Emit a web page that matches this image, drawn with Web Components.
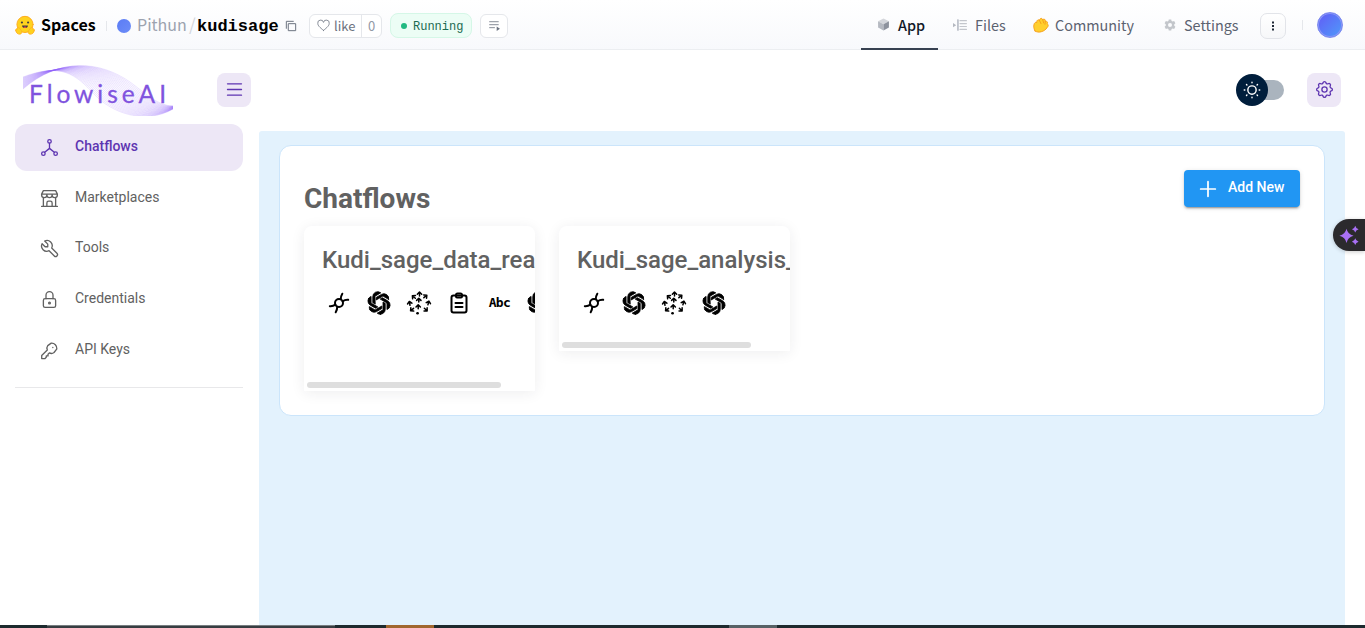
<!DOCTYPE html>
<html lang="en">
<head>
<meta charset="utf-8">
<title>Flowise</title>
<style>
html,body{margin:0;height:100%;overflow:hidden;background:#fff}
</style>
</head>
<body>
<space-app></space-app>
<script>
const define = (name, css, html) => customElements.define(name, class extends HTMLElement {
  constructor() {
    super();
    const t = document.createElement('template');
    t.innerHTML = `<style>*{box-sizing:border-box}svg{display:block;flex:none}${css}</style>` + (typeof html === 'function' ? html(this) : html);
    this.attachShadow({mode: 'open'}).append(t.content.cloneNode(true));
  }
});

const arrows = [[12.5,2.6,0],[6.6,5.8,-50],[18.6,5.2,50],[2.6,12,-10],[11.800,8.800,0],[21.500,11.600,15],[4.800,18.800,-130],[11.200,15.400,0],[19,18.800,135]];
const icons = {
  hierarchy: '<circle cx="12" cy="5" r="2"/><circle cx="5" cy="19" r="2"/><circle cx="19" cy="19" r="2"/><path d="M6.5 17.5l5.5-4.5l5.5 4.5M12 7v6"/>',
  store: '<path d="M3 21h18M3 7v1a3 3 0 0 0 6 0v-1m0 1a3 3 0 0 0 6 0v-1m0 1a3 3 0 0 0 6 0v-1h-18l2-4h14l2 4M5 21v-10.15M19 21v-10.15M9 21v-4a2 2 0 0 1 2-2h2a2 2 0 0 1 2 2v4"/>',
  tool: '<path d="M7 10h3v-3l-3.5-3.5a6 6 0 0 1 8 8l6 6a2 2 0 0 1-3 3l-6-6a6 6 0 0 1-8-8l3.5 3.5"/>',
  lock: '<rect x="5" y="11" width="14" height="10" rx="2"/><circle cx="12" cy="16" r="1"/><path d="M8 11v-4a4 4 0 1 1 8 0v4"/>',
  key: '<path d="M14 3.6a6 6 0 0 1 6.4 6.5l-3.2 4.2a5 5 0 0 1-5.4.5l-1.5 1.4v2h-2v1.6l-1.4 1.4h-3.8v-3.4l6.4-6.4a5 5 0 0 1 .5-5zM15.8 8.6h.01"/>',
  gear: '<path d="M10.325 4.317c.426-1.756 2.924-1.756 3.35 0a1.724 1.724 0 0 0 2.573 1.066c1.543-.94 3.31.826 2.37 2.37a1.724 1.724 0 0 0 1.065 2.572c1.756.426 1.756 2.924 0 3.35a1.724 1.724 0 0 0-1.066 2.573c.94 1.543-.826 3.31-2.37 2.37a1.724 1.724 0 0 0-2.572 1.065c-.426 1.756-2.924 1.756-3.35 0a1.724 1.724 0 0 0-2.573-1.066c-1.543.94-3.31-.826-2.37-2.37a1.724 1.724 0 0 0-1.065-2.572c-1.756-.426-1.756-2.924 0-3.35a1.724 1.724 0 0 0 1.066-2.573c-.94-1.543.826-3.31 2.37-2.37c1 .608 2.296.07 2.572-1.065z"/><circle cx="12" cy="12" r="3"/>',
  menu: '<path d="M4 5.500h16M4 12h16M4 18.500h16"/>',
  plus: '<path d="M12 4v16M4 12h16"/>',
  sun: '<circle cx="12" cy="12" r="5"/><path d="M12 2.700v.7M12 20.600v.7M2.700 12h.7M20.600 12h.7M5.400 5.400l.5.5M18.100 18.100l.5.5M18.600 5.400l-.5.5M5.900 18.100l-.5.5"/>',
  chain: '<circle cx="12" cy="12" r="4"/><path d="M2.800 15.200q3 .3 5.700-1.500M8.700 21.300q1.600-2.600 1.500-5.500M21.200 8.800q-3-.3-5.700 1.500M15.300 2.700q-1.600 2.600-1.500 5.500"/>',
  openai: '<path fill="currentColor" stroke-width=".75" d="M13.260 22.429a4.4755 4.4755 0 0 1-2.8764-1.0408l.1419-.0804 4.7783-2.7582a.7948.7948 0 0 0 .3927-.6813v-6.7369l2.02 1.1686a.071.071 0 0 1 .038.052v5.5826a4.504 4.504 0 0 1-4.4945 4.4944zm-9.6607-4.1254a4.4708 4.4708 0 0 1-.5346-3.0137l.142.0852 4.783 2.7582a.7712.7712 0 0 0 .7806 0l5.8428-3.3685v2.3324a.0804.0804 0 0 1-.0332.0615L9.74 19.9502a4.4992 4.4992 0 0 1-6.1408-1.6464zM2.3408 7.8956a4.485 4.485 0 0 1 2.3655-1.9728V11.6a.7664.7664 0 0 0 .3879.6765l5.8144 3.3543-2.0201 1.1685a.0757.0757 0 0 1-.071 0l-4.8303-2.7865A4.504 4.504 0 0 1 2.3408 7.872zm16.5963 3.8558L13.1038 8.364 15.1192 7.2a.0757.0757 0 0 1 .071 0l4.8303 2.7913a4.4944 4.4944 0 0 1-.6765 8.1042v-5.6772a.79.79 0 0 0-.407-.667zm2.0107-3.0231l-.142-.0852-4.7735-2.7818a.7759.7759 0 0 0-.7854 0L9.409 9.2297V6.8974a.0662.0662 0 0 1 .0284-.0615l4.8303-2.7866a4.4992 4.4992 0 0 1 6.6802 4.66zM8.3065 12.863l-2.02-1.1638a.0804.0804 0 0 1-.038-.0567V6.0742a4.4992 4.4992 0 0 1 7.3757-3.4537l-.142.0805L8.704 5.459a.7948.7948 0 0 0-.3927.6813z"/>',
  tree: arrows.map(([x, y, r]) => `<path transform="translate(${x} ${y}) rotate(${r})" d="M0 2.300V-1.300M-2.200 .6L0-1.600L2.200 .6"/>`).join('') + '<path d="M10.400 22.300h.3" stroke-width="2.400"/>',
  clipboard: '<rect x="4.500" y="4.500" width="15" height="17" rx="2"/><path d="M9 4.500V4a1.500 1.500 0 0 1 1.500-1.500h3A1.500 1.500 0 0 1 15 4v1.500a1 1 0 0 1-1 1h-4a1 1 0 0 1-1-1zM8.500 12h7M8.500 16h7"/>',
  copy: '<path d="M8 8h12v12H8zM4 16V4h12"/>',
  heart: '<path d="M12 21C5 15.500 1.500 12 1.500 8.300a5.300 5.300 0 0 1 10.500-2 5.300 5.300 0 0 1 10.500 2c0 3.700-3.500 7.200-10.500 12.700z"/>',
  logs: '<path d="M3 5h16M3 10.500h16M3 16h9"/><path d="M16 14v8l6-4z" fill="currentColor" stroke="none"/>',
  dots: '<g fill="currentColor" stroke="none"><rect x="10" y="3" width="4" height="4"/><rect x="10" y="10" width="4" height="4"/><rect x="10" y="17" width="4" height="4"/></g>',
  cube: '<g stroke="none"><path fill="#d4d6db" d="M12 1L22 6 12 11.500 2 6z"/><path fill="#b5b9c1" d="M2 6l10 5.500V23L2 17.500z"/><path fill="#8d929d" d="M22 6l-10 5.500V23l10-5.500z"/></g>',
  files: '<path d="M8.500 3v18" stroke="#9ca3af"/><path d="M12 4.500h11M12 9.500h11M12 14.500h11M12 19.500h11" stroke="#c3c6cc"/><path d="M0 8.500l5.500 3.800L0 16z" fill="#b5b9c1" stroke="none"/>',
  cog: '<g fill="currentColor" stroke="none"><path fill-rule="evenodd" d="M9.500 1h5l.6 3 2.200 1.200 3-1 2.500 4.300-2.300 2v3l2.300 2-2.500 4.300-3-1-2.200 1.200-.6 3h-5l-.6-3-2.200-1.200-3 1-2.500-4.300 2.300-2v-3l-2.300-2 2.500-4.300 3 1L8.900 4zM12 8a4 4 0 1 0 0 8 4 4 0 0 0 0-8z"/></g>',
  hand: '<g stroke="#f59a1b" stroke-width="1.300"><path fill="#ffcf2e" d="M3 21C0 16 1 10 3 8.500c1-1 2.500-.5 2.500.5C5 5 8 3 9.500 5c1-3.500 4-4 5-1 2.500-2 4.500 0 4 2.500 3-.5 4 1.500 2.800 3.500 2.200 1 2 4-.2 6C18 21.500 8 25 3 21z"/><path d="M9.500 5l2.500 5M14.500 4l1.500 5M18.500 6.500L18 11"/></g>',
  hug: '<circle cx="12" cy="11.300" r="9.700" fill="#ffd21e" stroke="#ffad1f" stroke-width="1.200"/><circle cx="8.300" cy="9" r="1.300" fill="#3a3b45" stroke="none"/><circle cx="15.700" cy="9" r="1.300" fill="#3a3b45" stroke="none"/><path d="M8.500 12.500h7c0 4.300-7 4.300-7 0z" fill="#3a3b45" stroke="none"/><path d="M10 14.800c1-1.500 3-1.500 4 0-1 1-3 1-4 0z" fill="#f14f45" stroke="none"/><path d="M1 19c-1-2 1-3 2-2-1-2 1.500-3 2.500-1l2 2.500c1.500 2 .5 4.500-2 4.500C3 23 1.500 21.500 1 19zM23 19c1-2-1-3-2-2 1-2-1.500-3-2.500-1l-2 2.500c-1.500 2-.5 4.500 2 4.500 2.500 0 4-1.500 4.500-4z" fill="#ffd21e" stroke="#ffad1f" stroke-width="1"/>',
  sparkle: '<g fill="currentColor" stroke="none"><path d="M9 4.500Q10.500 11.200 17.500 13 10.500 14.800 9 21.500 7.500 14.800.500 13 7.500 11.200 9 4.500z"/><path d="M19.500 1Q20.200 4.300 23.500 5 20.200 5.700 19.500 9 18.800 5.700 15.500 5 18.800 4.300 19.500 1zM19.500 16Q20.200 19.300 23.500 20 20.200 20.700 19.500 24 18.800 20.700 15.500 20 18.800 19.300 19.500 16z"/></g>'
};

define('ui-icon', ':host{display:block;flex:none;line-height:0}', el => {
  const s = el.getAttribute('size') || 20, w = el.getAttribute('stroke') || 1.5;
  return `<svg width="${s}" height="${s}" viewBox="0 0 24 24" fill="none" stroke="currentColor" stroke-width="${w}" stroke-linecap="round" stroke-linejoin="round" overflow="visible">${icons[el.getAttribute('name')]}</svg>`;
});

define('header-tab', `
:host{display:flex;align-items:center;height:50px;gap:8px;color:#5b6270;font-size:14.400px;white-space:nowrap}
:host([active]){color:#111827;border-bottom:2px solid #374151;font-weight:500;padding-top:2px}
`, '<slot name="icon"></slot><span><slot></slot></span>');

define('space-header', `
:host{display:flex;height:50px;border-bottom:1px solid #eceef1;background:linear-gradient(#fff,#f8f9fc);font-family:"Noto Sans CJK SC","Noto Sans",sans-serif;padding:0 22px 0 15px;align-items:center;line-height:24px}
.left{display:flex;align-items:center;flex:1;height:50px;padding-top:2px}
.left>*{flex:none}
.left>.sp,.left>.own,.left>.slash{padding-bottom:3px}
.left>.hug{margin-top:-2px}
.sp{font-weight:700;font-size:16px;margin-left:6px;width:55px}
.sep{width:1px;height:10px;background:#e5e7eb;margin:0 10px}
.dot{width:14px;height:14px;border-radius:50%;background:linear-gradient(135deg,#5b7cf5,#6d8df8)}
.own{color:#9ca3af;font-size:16px;margin-left:6px;width:52px}
.slash{color:#d1d5db;width:8px;font-size:17px}
.repo{font:bold 17px "Liberation Mono",monospace;width:81px;color:#000;padding-top:2px}
.copy{color:#6b7280;margin-left:6px}
.like{display:flex;margin-left:11px;width:73px;height:24px;border:1px solid #e5e7eb;border-radius:6px;background:#fff;color:#6b7280;font-size:13px;align-items:center}
.like b{font-weight:400;width:52px;display:flex;align-items:center;gap:4px;padding-left:7px;height:100%;border-right:1px solid #e5e7eb}
.like i{font-style:normal;flex:1;text-align:center;color:#9299a6}
.run{display:flex;margin-left:8px;width:82px;height:25px;border:1px solid #d5f7e7;border-radius:8px;background:#ecfdf5;align-items:center;color:#1b6b52;font:12px "Liberation Mono",monospace;padding-left:10px;gap:6px}
.run s{text-decoration:none;padding-top:2px}
.run u{width:6px;height:6px;border-radius:50%;background:#21b981}
.log{margin-left:8px;width:28px;height:24px;border:1px solid #e5e7eb;border-radius:6px;background:#fff;color:#6b7280;display:grid;place-items:center}
.right{display:flex;align-items:center;height:50px;padding-top:1px}
.more{width:26px;height:26px;border:1px solid #e2e4e9;border-radius:7px;display:grid;place-items:center;color:#1f2937;background:linear-gradient(#fff,#f6f7f9);margin-top:1px}
.av{width:26px;height:26px;border-radius:50%;border:1px solid #7d8af0;background:linear-gradient(135deg,#625bf6,#4f9bfa);box-shadow:inset 0 0 0 1px #8a97f6}
`, `
<div class="left"><ui-icon class="hug" name="hug" size="20"></ui-icon><span class="sp">Spaces</span><span class="sep"></span><span class="dot"></span><span class="own">Pithun</span><span class="slash">/</span><span class="repo">kudisage</span><ui-icon class="copy" name="copy" size="14" stroke="1.700"></ui-icon>
<span class="like"><b><ui-icon name="heart" size="13"></ui-icon>like</b><i>0</i></span><span class="run"><u></u><s>Running</s></span><span class="log"><ui-icon name="logs" size="13"></ui-icon></span></div>
<div class="right">
<header-tab active style="width:77px;padding-left:16px;height:49px;padding-top:1px"><ui-icon slot="icon" name="cube" size="13"></ui-icon>App</header-tab>
<header-tab style="width:80px;padding-left:15px"><ui-icon slot="icon" name="files" size="14" stroke="2"></ui-icon>Files</header-tab>
<header-tab style="width:130px;padding-left:15px;gap:6px"><ui-icon slot="icon" name="hand" size="16"></ui-icon>Community</header-tab>
<header-tab style="width:112px;padding-left:16px"><ui-icon slot="icon" name="cog" size="12" style="color:#c3c6cb"></ui-icon>Settings</header-tab>
<span class="more"><ui-icon name="dots" size="12"></ui-icon></span><span class="sep" style="margin:0 14px 0 16px"></span><span class="av"></span></div>`);

define('flowise-logo', `
:host{display:grid;width:150px;height:52px}
:host>*{grid-area:1/1}
.t{font:24.500px/52px Lato,sans-serif;letter-spacing:4px;color:#8053de;padding:4px 0 0 6px;white-space:nowrap;-webkit-text-stroke:.3px #8053de}
`, () => {
  const a = [23,88,60,56,100,60,130,81,145,92,158,105,173,105], b = [23,76,60,62,75,72,95,94,112,112,145,124,173,108];
  let p = '';
  for (let i = 0; i <= 24; i++) {
    const v = a.map((n, k) => (n + (b[k] - n) * i / 24).toFixed(1));
    p += `<path d="M${v[0]} ${v[1]}C${v.slice(2, 8).join(' ')} ${v.slice(8).join(' ')}"/>`;
  }
  return `<svg width="150" height="52" viewBox="23 63 150 52" fill="none" stroke="#9061f9" stroke-width=".5" stroke-opacity=".34">${p}</svg><span class="t">FlowiseAI</span>`;
});

define('icon-button', ':host{display:grid;place-items:center;width:34px;height:34px;border-radius:8px;background:#ede7f6;color:#5e35b1;flex:none}', '<slot></slot>');

define('theme-switch', `
:host{display:flex;align-items:center;width:48px;height:32px;flex:none}
.k{width:32px;height:32px;border-radius:50%;background:#001e3c;color:#fff;display:grid;place-items:center;order:1;z-index:1}
.r{width:25px;height:20px;border-radius:0 10px 10px 0;background:#aab4be;margin-left:-9px;order:2}
`, '<span class="k"><ui-icon name="sun" size="20" stroke="1.700"></ui-icon></span><span class="r"></span>');

define('app-bar', `
:host{display:flex;box-sizing:border-box;align-items:center;height:81px;padding:0 24px 2px 23px}
icon-button.m{margin-left:44px}
theme-switch{margin:0 23px 0 auto}
`, '<flowise-logo></flowise-logo><icon-button class="m"><ui-icon name="menu" size="21"></ui-icon></icon-button><theme-switch></theme-switch><icon-button><ui-icon name="gear" size="21"></ui-icon></icon-button>');

define('nav-item', `
:host{display:flex;align-items:center;height:46.750px;margin-bottom:4px;border-radius:12px;padding-left:24px;gap:15px;color:#616161;font:14px/20px Roboto,sans-serif}
:host([selected]){background:#ede7f6;color:#5e35b1;font-weight:500}
span{padding-bottom:3px}
`, el => `<ui-icon name="${el.getAttribute('icon')}" size="21"></ui-icon><span><slot></slot></span>`);

define('side-nav', `
:host{display:block;width:259px;box-sizing:border-box;flex:none;padding:0 16px 0 15px;margin-top:-7px}
hr{border:0;border-top:1px solid #e8e8ea;margin:13px 0 0}
`, `<nav><nav-item icon="hierarchy" selected>Chatflows</nav-item><nav-item icon="store">Marketplaces</nav-item><nav-item icon="tool">Tools</nav-item><nav-item icon="lock">Credentials</nav-item><nav-item icon="key">API Keys</nav-item></nav><hr>`);

define('flow-card', `
:host{display:flex;box-sizing:border-box;flex-direction:column;width:231px;overflow:hidden;background:#fff;border-radius:8px 8px 0 0;box-shadow:0 2px 14px rgba(32,40,45,.08);padding:18px 0 3px 18px;color:#616161;font-family:Roboto,sans-serif}
h2{font-weight:500;font-size:24px;line-height:32px;margin:0;white-space:nowrap}
.i{display:flex;gap:14px;margin:14.400px 0 0 4.400px;color:#000}
.bar{margin:auto 0 0 -15px;height:6px;border-radius:3px;background:#dedede;width:var(--bar)}
`, '<h2><slot name="title"></slot></h2><div class="i"><slot></slot></div><div class="bar"></div>');

define('flow-node', `
:host{display:grid;place-items:center;width:26px;height:26px;flex:none}
b{font:bold 13px/26px "DejaVu Sans Mono",monospace;letter-spacing:-.7px}
`, el => el.hasAttribute('icon') ? `<ui-icon name="${el.getAttribute('icon')}" size="${el.getAttribute('size') || 24}" stroke="${el.getAttribute('stroke') || 2}"></ui-icon>` : '<b><slot></slot></b>');

define('add-button', `
:host{display:flex;box-sizing:border-box;align-items:center;width:116px;height:37px;border-radius:4px;background:#2196f3;color:#fff;font:500 14px/20px Roboto,sans-serif;padding-left:13px;gap:9px;box-shadow:0 3px 1px -2px rgba(0,0,0,.2),0 2px 2px rgba(0,0,0,.14),0 1px 5px rgba(0,0,0,.12)}
span{padding-bottom:3px}
`, '<ui-icon name="plus" size="22" stroke="1.900"></ui-icon><span><slot></slot></span>');

define('flow-board', `
:host{display:block;flex:1;background:#e3f2fd;border-radius:3px 3px 0 0;padding:14px 20px;min-width:0}
section{height:271px;background:#fff;border:1px solid #cbe5fb;border-radius:12px;padding:24px}
header{display:flex;justify-content:space-between;height:56px}
h1{font:700 28px/36px Roboto,sans-serif;color:#616161;margin:11px 0 0}
.g{display:flex;gap:24px;align-items:flex-start}
`, `<section><header><h1>Chatflows</h1><add-button>Add New</add-button></header><div class="g">
<flow-card style="height:165px;--bar:194px"><span slot="title">Kudi_sage_data_rea</span><flow-node icon="chain"></flow-node><flow-node icon="openai" size="26"></flow-node><flow-node icon="tree" stroke="1.500"></flow-node><flow-node icon="clipboard"></flow-node><flow-node>Abc</flow-node><flow-node icon="openai" size="26"></flow-node></flow-card>
<flow-card style="height:125px;--bar:189px"><span slot="title">Kudi_sage_analysis_</span><flow-node icon="chain"></flow-node><flow-node icon="openai" size="26"></flow-node><flow-node icon="tree" stroke="1.500"></flow-node><flow-node icon="openai" size="26"></flow-node></flow-card></div></section>`);

define('task-strip', `
:host{display:flex;height:3px;background:#1d2a2e}
i{height:3px;flex:none}
`, '<i style="width:47px"></i><i style="width:288px;background:#373d41;border-top:1px solid #777d80"></i><i style="width:51px"></i><i style="width:48px;background:#a0672f"></i><i style="width:295px"></i><i style="width:48px;background:#576266"></i>');

define('assist-tab', ':host{position:absolute;box-sizing:border-box;right:0;top:219px;width:32px;height:32px;border-radius:16px 0 0 16px;background:#2b2a2d;color:#a970f5;padding:6px 0 0 6px;box-shadow:0 1px 4px rgba(0,0,0,.2)}', '<ui-icon name="sparkle" size="20"></ui-icon>');

define('space-app', `
:host{display:flex;flex-direction:column;height:628px;width:1365px;position:relative;overflow:hidden}
space-header{box-sizing:border-box}
main{display:flex;flex:1;padding-right:20px;min-height:0}
flow-board{box-sizing:border-box}
`, '<space-header></space-header><app-bar></app-bar><main><side-nav></side-nav><flow-board></flow-board></main><task-strip></task-strip><assist-tab></assist-tab>');
</script>
</body>
</html>
